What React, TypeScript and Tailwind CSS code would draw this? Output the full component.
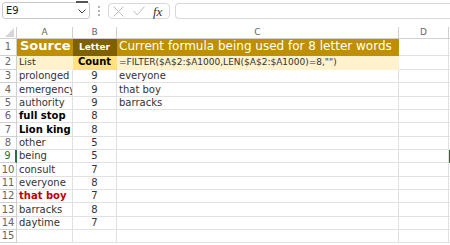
import React from "react";

type Cell = { a?: string; b?: string; c?: string; aClass?: string };

const rows: Cell[] = [
  { a: "prolonged", b: "9", c: "everyone" },
  { a: "emergency", b: "9", c: "that boy" },
  { a: "authority", b: "9", c: "barracks" },
  { a: "full stop", b: "8", aClass: "font-bold text-black" },
  { a: "Lion king", b: "8", aClass: "font-bold text-black" },
  { a: "other", b: "5" },
  { a: "being", b: "5" },
  { a: "consult", b: "7" },
  { a: "everyone", b: "8" },
  { a: "that boy", b: "7", aClass: "font-bold text-[#c00000]" },
  { a: "barracks", b: "8" },
  { a: "daytime", b: "7" },
  {},
];

const cols = "grid-cols-[17px_56px_44px_282px_50px_1fr]";
const cell = "border-r border-b border-[#e1e1e1] overflow-hidden whitespace-nowrap flex items-end";

export default function App() {
  return (
    <div className="w-[450px] h-[245px] overflow-hidden bg-white font-['DejaVu_Sans',sans-serif] text-[#333] select-none">
      {/* formula bar */}
      <div className="h-[27px] relative flex items-start pt-[2px] pl-[2px]">
        <div className="relative w-[88px] h-[17px] border border-[#c8c8c8] rounded-[3px] flex items-center pl-[3px] text-[10px] text-[#222]">
          E9
          <div className="absolute right-[1px] top-[-2px] w-[12px] h-[2px] bg-[#555]" />
          <svg className="absolute right-[3px] top-[6px]" width="8" height="5" viewBox="0 0 8 5">
            <path d="M0.5 0.5 L4 4 L7.5 0.5" fill="none" stroke="#444" strokeWidth="1" />
          </svg>
        </div>
        <div className="ml-[8px] mt-[4px] flex flex-col gap-[2px]">
          <div className="w-[2px] h-[2px] rounded-full bg-[#999]" />
          <div className="w-[2px] h-[2px] rounded-full bg-[#999]" />
          <div className="w-[2px] h-[2px] rounded-full bg-[#999]" />
        </div>
        <div className="ml-[8px] mt-[1px] w-[62px] h-[16px] border border-[#d8d8d8] rounded-[4px] flex items-center">
          <svg className="ml-[4px]" width="11" height="11" viewBox="0 0 11 11">
            <path d="M0.5 0.5 L10.5 10.5 M10.5 0.5 L0.5 10.5" stroke="#bdbdbd" strokeWidth="1" />
          </svg>
          <svg className="ml-[9px]" width="12" height="10" viewBox="0 0 12 10">
            <path d="M0.5 5 L4.2 9 L11.5 0.5" fill="none" stroke="#bdbdbd" strokeWidth="1" />
          </svg>
          <span className="ml-[8px] font-['Liberation_Serif',serif] italic text-[13px] leading-none text-[#333]">
            fx
          </span>
        </div>
        <div className="ml-[5px] mt-[1px] flex-1 h-[16px] border border-r-0 border-[#d8d8d8] rounded-l-[4px]" />
      </div>

      {/* grid */}
      <div className={`grid ${cols} grid-rows-[12px_17px_14px_repeat(13,13.33px)]`}>
        {/* column header */}
        <div className="border-r border-b border-[#d0d0d0] relative">
          <svg className="absolute right-[2px] bottom-[1px]" width="9" height="9" viewBox="0 0 9 9">
            <path d="M9 0 L9 9 L0 9 Z" fill="#d6d6d6" />
          </svg>
        </div>
        {["A", "B", "C", "D", ""].map((l, i) => (
          <div
            key={i}
            className="border-r border-b border-[#d0d0d0] flex items-center justify-center text-[9px] text-[#666]"
          >
            {l}
          </div>
        ))}

        {/* row 1 */}
        <div className="border-r border-b border-[#d0d0d0] flex items-end justify-center pb-[1px] text-[10px] text-[#666]">1</div>
        <div className={`${cell} bg-[#bf8f00] border-transparent pl-[3px] text-[13px] font-bold text-white`}>Source</div>
        <div className={`${cell} bg-[#7f6000] border-transparent justify-center pb-[1px] text-[9px] font-bold text-white`}>Letter</div>
        <div className={`${cell} bg-[#bf8f00] border-transparent pl-[2px] text-[12px] text-white`}>
          Current formula being used for 8 letter words
        </div>
        <div className={cell} />
        <div className={cell} />

        {/* row 2 */}
        <div className="border-r border-b border-[#d0d0d0] flex items-end justify-center text-[10px] text-[#666]">2</div>
        <div className={`${cell} bg-[#fff2cc] border-transparent pl-[2px] text-[9.5px] text-[#333]`}>List</div>
        <div className={`${cell} bg-[#ffe180] border-transparent justify-center text-[10px] font-bold text-black`}>Count</div>
        <div className={`${cell} bg-[#fff2cc] border-transparent pl-[2px] text-[9px] text-[#333]`}>
          =FILTER($A$2:$A1000,LEN($A$2:$A1000)=8,"")
        </div>
        <div className={cell} />
        <div className={cell} />

        {rows.map((r, i) => {
          const n = i + 3;
          const sel = n === 9;
          return (
            <React.Fragment key={n}>
              <div
                className={`border-b border-[#d0d0d0] flex items-end justify-center text-[10px] leading-[12px] ${
                  sel ? "border-r-2 border-r-[#217346] text-[#217346]" : "border-r text-[#666]"
                }`}
              >
                {n}
              </div>
              <div className={`${cell} pl-[2px] text-[10px] leading-[12px] ${r.aClass ?? "text-[#333]"}`}>{r.a}</div>
              <div className={`${cell} justify-center text-[10px] leading-[12px] text-[#333]`}>{r.b}</div>
              <div className={`${cell} pl-[2px] text-[10px] leading-[12px] text-[#333]`}>{r.c}</div>
              <div className={cell} />
              <div className={sel ? "border-2 border-[#217346]" : cell} />
            </React.Fragment>
          );
        })}
      </div>
    </div>
  );
}
